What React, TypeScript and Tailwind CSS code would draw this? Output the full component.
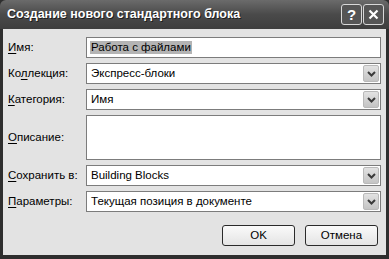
import React from 'react';

const font = { fontFamily: '"Liberation Sans", Arial, sans-serif' };

const Chevron: React.FC = () => (
  <div className="absolute right-[1px] top-[1px] bottom-[1px] w-[16px] rounded-[2px] border border-[#b9b9b9] bg-gradient-to-b from-[#e2e2e2] to-[#c4c4c4] flex items-center justify-center">
    <svg width="9" height="6" viewBox="0 0 9 6">
      <path d="M1 1 L4.5 4.5 L8 1" fill="none" stroke="#3a3a3a" strokeWidth="2" />
    </svg>
  </div>
);

interface RowProps {
  label: React.ReactNode;
  value?: string;
  select?: boolean;
  selected?: boolean;
  tall?: boolean;
}

const Row: React.FC<RowProps> = ({ label, value, select, selected, tall }) => (
  <div className="flex items-center">
    <div className="w-[78px] shrink-0 text-[11.5px] text-black">{label}</div>
    <div
      className={`relative flex-1 border border-[#7c7c7c] bg-white ${tall ? 'h-[45px]' : 'h-[21px]'} flex items-center pl-[3px] text-[11.5px] text-black`}
    >
      {value && (
        <span className={selected ? 'bg-[#b4b4b4] px-[1px] leading-[13px]' : 'px-[1px]'}>{value}</span>
      )}
      {select && <Chevron />}
    </div>
  </div>
);

const Acc: React.FC<{ children: React.ReactNode }> = ({ children }) => <span className="underline underline-offset-[1.5px]">{children}</span>;

export default function App() {
  return (
    <div className="w-[389px] h-[259px] bg-[#2e2e2e] flex flex-col" style={font}>
      {/* title bar */}
      <div className="h-[29px] shrink-0 rounded-t-[6px] bg-gradient-to-b from-[#6b6b6b] via-[#4a4a4a] to-[#3e3e3e] flex items-center pl-[7px] pr-[5px]">
        <div className="flex-1 text-[12.5px] font-bold text-white [text-shadow:1px_1px_0_#1e1e1e]">
          Создание нового стандартного блока
        </div>
        <div className="flex gap-[1px]">
          <div className="w-[21px] h-[21px] rounded-[3px] border border-[#d8d8d8] bg-[#555555] flex items-center justify-center text-white font-bold text-[15px] leading-none">
            ?
          </div>
          <div className="w-[21px] h-[21px] rounded-[3px] border border-[#d8d8d8] bg-[#555555] flex items-center justify-center">
            <svg width="11" height="11" viewBox="0 0 11 11">
              <path d="M1.5 1.5 L9.5 9.5 M9.5 1.5 L1.5 9.5" stroke="#ffffff" strokeWidth="2.2" />
            </svg>
          </div>
        </div>
      </div>

      {/* client area */}
      <div className="flex-1 mx-[3px] mb-[4px] bg-[#e3e3e3] flex flex-col pt-[8px] pl-[5px] pr-[5px]">
        <div className="flex flex-col gap-[5px]">
          <Row label={<><Acc>И</Acc>мя:</>} value="Работа с файлами" selected />
          <Row label={<>Ко<Acc>л</Acc>лекция:</>} value="Экспресс-блоки" select />
          <Row label={<><Acc>К</Acc>атегория:</>} value="Имя" select />
          <Row label={<><Acc>О</Acc>писание:</>} tall />
          <Row label={<><Acc>С</Acc>охранить в:</>} value="Building Blocks" select />
          <Row label={<><Acc>П</Acc>араметры:</>} value="Текущая позиция в документе" select />
        </div>
        <div className="flex justify-end gap-[10px] mt-[13px] pr-[3px]">
          <button className="w-[73px] h-[21px] rounded-[3px] border border-[#2a2a2a] bg-gradient-to-b from-[#fafafa] to-[#e4e4e4] text-[11.5px] text-black">
            OK
          </button>
          <button className="w-[73px] h-[21px] rounded-[3px] border border-[#2a2a2a] bg-gradient-to-b from-[#fafafa] to-[#e4e4e4] text-[11.5px] text-black">
            Отмена
          </button>
        </div>
      </div>
    </div>
  );
}
